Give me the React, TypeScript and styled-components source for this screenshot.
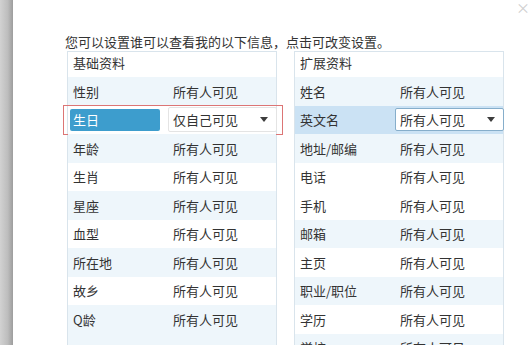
import styled, { createGlobalStyle } from 'styled-components';

const GlobalStyle = createGlobalStyle`
    html, body {
        margin: 0;
        padding: 0;
        height: 100%;
        overflow: hidden;
        background: #ffffff;
    }
    body {
        font-family: "Noto Sans CJK SC", "Noto Sans", sans-serif;
        color: #333333;
    }
`;

type Row = { label: string; value: string; striped: boolean; active?: 'badge' | 'select' };

const BASIC: Row[] = [
    { label: '性别', value: '所有人可见', striped: true },
    { label: '生日', value: '仅自己可见', striped: false, active: 'badge' },
    { label: '年龄', value: '所有人可见', striped: true },
    { label: '生肖', value: '所有人可见', striped: false },
    { label: '星座', value: '所有人可见', striped: true },
    { label: '血型', value: '所有人可见', striped: false },
    { label: '所在地', value: '所有人可见', striped: true },
    { label: '故乡', value: '所有人可见', striped: false },
    { label: 'Q龄', value: '所有人可见', striped: true },
    { label: '', value: '', striped: true },
];

const EXTENDED: Row[] = [
    { label: '姓名', value: '所有人可见', striped: true },
    { label: '英文名', value: '所有人可见', striped: false, active: 'select' },
    { label: '地址/邮编', value: '所有人可见', striped: true },
    { label: '电话', value: '所有人可见', striped: false },
    { label: '手机', value: '所有人可见', striped: false },
    { label: '邮箱', value: '所有人可见', striped: true },
    { label: '主页', value: '所有人可见', striped: false },
    { label: '职业/职位', value: '所有人可见', striped: true },
    { label: '学历', value: '所有人可见', striped: false },
    { label: '学校', value: '所有人可见', striped: true },
];

const Page = styled.div`
    display: flex;
    height: 345px;
    overflow: hidden;
`;

const WindowEdge = styled.div`
    flex: 0 0 13px;
    background: linear-gradient(to right, #d2d2d2, #bdbdbd 60%, #9d9d9d);
`;

const Dialog = styled.div`
    position: relative;
    flex: 1;
    padding: 33px 0 0 52px;
`;

const CloseMark = styled.span`
    position: absolute;
    top: -3px;
    right: 0;
    font-size: 14px;
    color: #cfcfcf;
`;

const Hint = styled.p`
    margin: 0;
    font-size: 13px;
    line-height: 18px;
    color: #333;
`;

const Columns = styled.div`
    display: grid;
    grid-template-columns: 210px 210px;
    column-gap: 17px;
    margin-left: 2px;
`;

const Panel = styled.div`
    border: 1px solid #d9e4ec;
    border-bottom: none;
    background: #ffffff;
`;

const PanelTitle = styled.div`
    height: 25px;
    padding-left: 5px;
    font-size: 13px;
    line-height: 22px;
`;

const RowLine = styled.div<{ $striped: boolean; $selected: boolean }>`
    position: relative;
    display: grid;
    grid-template-columns: 100px 1fr;
    align-items: center;
    height: 28.5px;
    font-size: 13px;
    background: ${(p) => (p.$selected ? '#cbe2f4' : p.$striped ? '#eef6fb' : '#ffffff')};
`;

const Label = styled.span`
    padding-left: 5px;
    white-space: nowrap;
`;

const Value = styled.span`
    padding-left: 5px;
    white-space: nowrap;
`;

const Badge = styled.span`
    margin: 0 8px 0 2px;
    height: 22px;
    line-height: 22px;
    padding-left: 3px;
    border-radius: 2px;
    background: #3d9dcd;
    color: #ffffff;
`;

const Select = styled.div<{ $focused: boolean }>`
    display: flex;
    align-items: center;
    justify-content: space-between;
    height: ${(p) => (p.$focused ? '21px' : '23px')};
    margin-right: -1px;
    padding: 0 8px 0 4px;
    background: #ffffff;
    border: 1px solid ${(p) => (p.$focused ? '#86aecb' : '#e4e4e4')};
    border-radius: 2px;
`;

const Caret = styled.span`
    width: 0;
    height: 0;
    border-left: 4px solid transparent;
    border-right: 4px solid transparent;
    border-top: 5px solid #3d3d3d;
`;

const Marker = styled.span`
    position: absolute;
    top: -1px;
    bottom: -1px;
    left: -5px;
    right: -7px;
    border: 1.5px solid #dc7575;
    pointer-events: none;
`;

function PrivacyRow({ row }: { row: Row }) {
    if (row.active === 'badge') {
        return (
            <RowLine $striped={false} $selected={false}>
                <Badge>{row.label}</Badge>
                <Select $focused={false}>
                    {row.value}
                    <Caret />
                </Select>
                <Marker />
            </RowLine>
        );
    }
    if (row.active === 'select') {
        return (
            <RowLine $striped={false} $selected>
                <Label>{row.label}</Label>
                <Select $focused>
                    {row.value}
                    <Caret />
                </Select>
            </RowLine>
        );
    }
    return (
        <RowLine $striped={row.striped} $selected={false}>
            <Label>{row.label}</Label>
            <Value>{row.value}</Value>
        </RowLine>
    );
}

function PrivacyPanel({ title, rows }: { title: string; rows: Row[] }) {
    return (
        <Panel>
            <PanelTitle>{title}</PanelTitle>
            {rows.map((row, i) => (
                <PrivacyRow key={i} row={row} />
            ))}
        </Panel>
    );
}

export default function App() {
    return (
        <>
            <GlobalStyle />
            <Page>
                <WindowEdge />
                <Dialog>
                    <CloseMark>×</CloseMark>
                    <Hint>您可以设置谁可以查看我的以下信息，点击可改变设置。</Hint>
                    <Columns>
                        <PrivacyPanel title="基础资料" rows={BASIC} />
                        <PrivacyPanel title="扩展资料" rows={EXTENDED} />
                    </Columns>
                </Dialog>
            </Page>
        </>
    );
}
